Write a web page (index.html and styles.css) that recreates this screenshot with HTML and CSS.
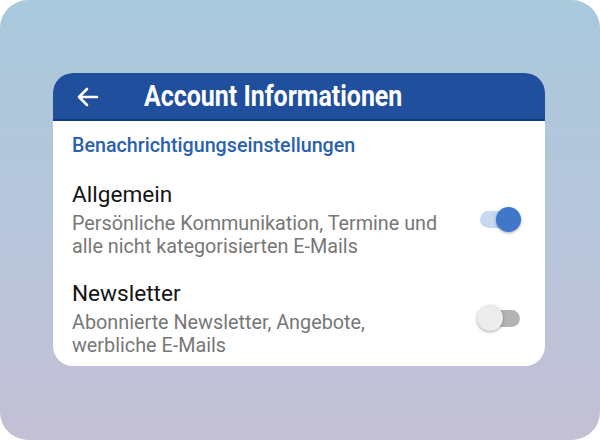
FILE: index.html
```html
<!DOCTYPE html>
<html lang="de">

<head>
  <meta charset="UTF-8" />
  <meta name="viewport" content="width=device-width, initial-scale=1.0" />
  <title>Account Informationen</title>
  <link rel="stylesheet" href="styles.css">
</head>

<body>
  <!-- Background frame -->
  <div class="frame">
    <!-- Settings card -->
    <div class="card">
      <div class="app-bar">
        <svg class="back" width="22" height="22" viewBox="0 0 22 22">
          <path d="M20 11H3M10 3L2 11l8 8" fill="none" stroke="#fff" stroke-width="2.6" stroke-linecap="round" stroke-linejoin="round" />
        </svg>
        <h1>Account Informationen</h1>
      </div>

      <div class="content">
        <h2>Benachrichtigungseinstellungen</h2>

        <div class="setting">
          <div class="setting-text">
            <div class="setting-title">Allgemein</div>
            <div class="setting-desc">Persönliche Kommunikation, Termine und<br>alle nicht kategorisierten E-Mails</div>
          </div>
          <div class="switch on"><span class="thumb"></span></div>
        </div>

        <div class="setting">
          <div class="setting-text">
            <div class="setting-title">Newsletter</div>
            <div class="setting-desc">Abonnierte Newsletter, Angebote,<br>werbliche E-Mails</div>
          </div>
          <div class="switch"><span class="thumb"></span></div>
        </div>
      </div>
    </div>
  </div>
</body>

</html>
```

FILE: styles.css
```css
* {
  box-sizing: border-box;
}

body {
  margin: 0;
  background: #fff;
  font-family: Roboto, "Noto Sans", sans-serif;
}

.frame {
  width: 600px;
  height: 440px;
  border-radius: 28px;
  background: linear-gradient(180deg, #a9c9dd 0%, #b6c5da 50%, #c4c0d6 100%);
  padding: 73px 55px 0 53px;
}

.card {
  width: 492px;
  height: 293px;
  background: #fff;
  border-radius: 20px;
  overflow: hidden;
}

.app-bar {
  height: 48px;
  background: #1f4f9d;
  border-bottom: 2px solid #0f3a85;
  display: flex;
  align-items: center;
  padding-left: 24px;
}

.back {
  margin-top: 2px;
}

/* condensed bold title */
.app-bar h1 {
  margin: 0 0 0 45px;
  color: #fff;
  font-size: 29px;
  font-weight: 700;
  white-space: nowrap;
  transform: scaleX(0.86);
  transform-origin: left center;
}

.content {
  padding: 13px 25px 0 19px;
}

.content h2 {
  margin: 0 0 23px;
  font-size: 19.7px;
  line-height: 24px;
  font-weight: 500;
  color: #2b5fb0;
}

.setting {
  display: flex;
  align-items: center;
  justify-content: space-between;
  margin-bottom: 22px;
}

.setting-title {
  font-size: 22.6px;
  color: #141414;
  line-height: 28px;
}

.setting-desc {
  font-size: 19.8px;
  color: #777;
  line-height: 23px;
  margin-top: 3px;
}

.switch {
  position: relative;
  width: 40px;
  height: 17px;
  border-radius: 9px;
  background: #b3b3b3;
}

.switch.on {
  background: #c6d9f1;
}

.thumb {
  position: absolute;
  top: -5px;
  left: -3px;
  width: 26px;
  height: 26px;
  border-radius: 50%;
  background: #ececec;
  box-shadow: 0 1px 3px rgba(0, 0, 0, 0.35);
}

.switch.on .thumb {
  left: auto;
  right: -1px;
  width: 25px;
  height: 25px;
  top: -4px;
  background: #3f78c8;
}
```
